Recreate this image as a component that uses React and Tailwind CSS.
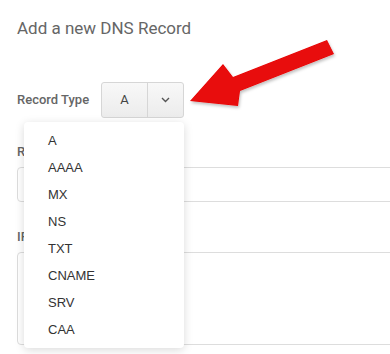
import React from "react";

const types = ["A", "AAAA", "MX", "NS", "TXT", "CNAME", "SRV", "CAA"];

export default function App() {
  return (
    <div className="relative w-[390px] h-[354px] overflow-hidden bg-white pl-[17px] pt-[18px] font-['Roboto',sans-serif]">
      <h1 className="text-[17px] leading-[20px] text-[#666] font-normal">Add a new DNS Record</h1>

      <div className="mt-[44px] flex items-center">
        <span className="w-[84px] text-[13px] font-medium text-[#666]">Record Type</span>
        <div className="relative">
          <div className="flex h-[36px] w-[83px] rounded-[3px] border border-[#d6d6d6] bg-gradient-to-b from-[#f8f8f8] to-[#ececec]">
            <div className="flex w-[46px] items-center justify-center border-r border-[#d6d6d6] text-[13px] text-[#444]">A</div>
            <div className="flex flex-1 items-center justify-center">
              <svg width="9" height="6" viewBox="0 0 9 6" fill="none">
                <path d="M1 1l3.5 3.5L8 1" stroke="#555" strokeWidth="1.4" />
              </svg>
            </div>
          </div>

          <ul className="absolute right-0 top-[40px] z-10 w-[160px] rounded-[4px] bg-white py-[5px] shadow-[0_2px_10px_rgba(0,0,0,0.15)] font-['Liberation_Sans',Arial,sans-serif]">
            {types.map((t) => (
              <li key={t} className="flex h-[27px] items-center pl-[24px] text-[13px] text-[#333]">
                {t}
              </li>
            ))}
          </ul>
        </div>
      </div>

      <div className="mt-[26px] text-[13px] leading-[16px] font-medium text-[#666]">Record Name</div>
      <div className="mt-[7px] h-[35px] w-[400px] rounded-[4px] border border-[#ddd]" />

      <div className="mt-[27px] text-[13px] leading-[16px] font-medium text-[#666]">IPv4 Address</div>
      <div className="mt-[7px] h-[93px] w-[400px] rounded-[4px] border border-[#ddd]" />

      <svg className="absolute left-0 top-0 z-20" width="390" height="354" viewBox="0 0 390 354">
        <defs>
          <filter id="sh" x="-10%" y="-10%" width="130%" height="140%">
            <feDropShadow dx="1" dy="2" stdDeviation="1.5" floodColor="#000" floodOpacity="0.25" />
          </filter>
        </defs>
        <polygon
          points="327,40 334,54 240,91 238,106 190,101 223,64 233,77"
          fill="#e80707"
          filter="url(#sh)"
        />
      </svg>
    </div>
  );
}
